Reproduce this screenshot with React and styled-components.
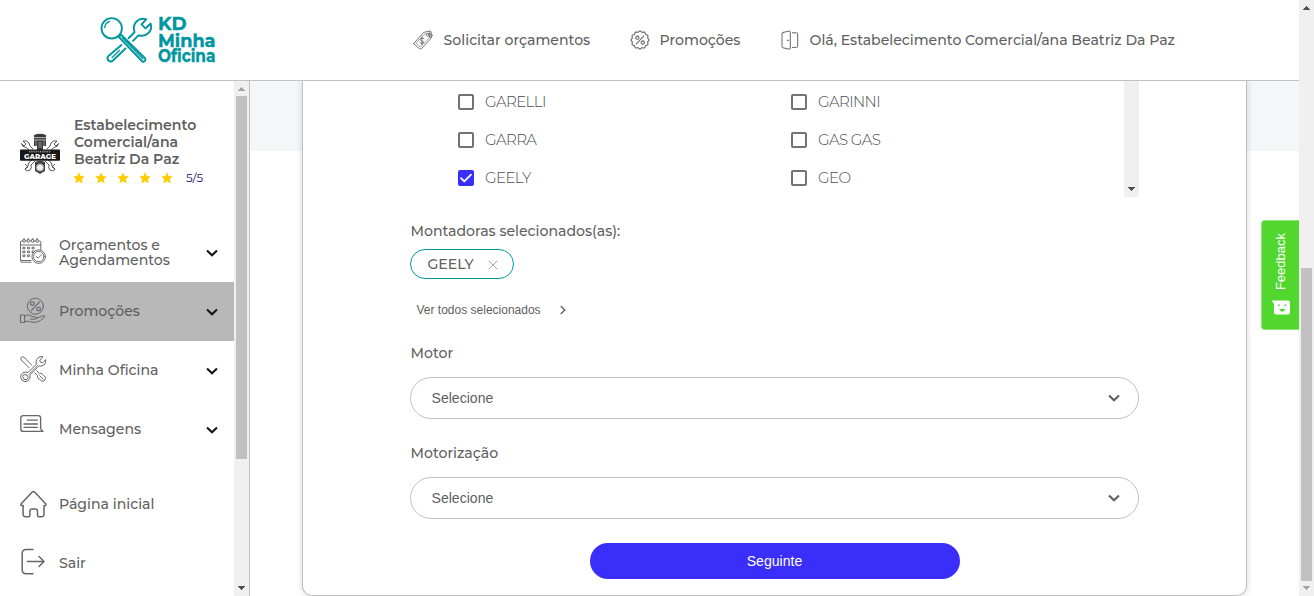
import React from "react";
import styled, { createGlobalStyle } from "styled-components";

const Global = createGlobalStyle`
  *, *::before, *::after { box-sizing: border-box; }
  body { margin: 0; background: #fff; overflow: hidden; }
`;

const brand = `Montserrat, Inter, "Open Sans", sans-serif`;
const arial = `"Liberation Sans", Arial, sans-serif`;

const Page = styled.div`
  display: flex;
  width: 1314px;
  height: 596px;
  overflow: hidden;
  font-family: ${brand};
  color: #5f5f61;
`;
const Main = styled.div`
  flex: 1;
  display: flex;
  flex-direction: column;
  position: relative;
`;
const Header = styled.header`
  height: 81px;
  flex: none;
  display: flex;
  align-items: center;
  border-bottom: 1px solid #c1c1c1;
  padding-left: 99px;
`;
const LogoSvg = styled.svg`
  flex: none;
  overflow: visible;
`;
const Nav = styled.nav`
  display: flex;
  align-items: center;
  margin-left: 195px;
`;
const NavItem = styled.a`
  display: flex;
  align-items: center;
  flex: none;
  width: ${(p) => p.$w}px;
  gap: ${(p) => p.$gap || 9.6}px;
  white-space: nowrap;
`;
const Txt = styled.span`
  font-size: ${(p) => p.$size || 14.08}px;
  font-weight: ${(p) => p.$weight || 500};
  letter-spacing: ${(p) => p.$ls || 0}px;
  line-height: ${(p) => p.$lh || 18}px;
  color: ${(p) => p.$color || "inherit"};
  white-space: nowrap;
`;
const Body = styled.div`
  flex: 1;
  display: flex;
  min-height: 0;
`;
const Sidebar = styled.aside`
  width: 250px;
  display: flex;
  border-right: 1px solid #c1c1c1;
`;
const SideContent = styled.div`
  width: 234px;
  display: flex;
  flex-direction: column;
`;
const Profile = styled.div`
  display: flex;
  height: 142px;
  padding: 36px 0 0 20px;
  gap: 14px;
`;
const Avatar = styled.div`
  padding-top: 16px;
  height: 58px;
`;
const ProfileText = styled.div`
  display: flex;
  flex-direction: column;
`;
const Stars = styled.div`
  display: flex;
  gap: 10px;
  margin-right: 13px;
  svg { display: block; }
`;
const Rating = styled.div`
  display: flex;
  align-items: center;
  height: 19px;
  margin-left: -1px;
`;
const MenuItem = styled.a`
  display: flex;
  align-items: center;
  height: 59px;
  flex: none;
  padding: 0 15px 0 19px;
  gap: 12px;
  background: ${(p) => (p.$active ? "#b8b8b8" : "transparent")};
`;
const MenuIcon = styled.span`
  display: block;
  padding-bottom: ${(p) => p.$lift || 0}px;
  svg { display: block; }
`;
const MenuLabel = styled.div`
  flex: 1;
  display: flex;
  flex-direction: column;
`;
const MenuGap = styled.div`
  height: 15px;
`;
const Track = styled.div`
  width: 15px;
  flex: none;
  display: flex;
  flex-direction: column;
  align-items: center;
  justify-content: space-between;
  background: #f0f0f0;
`;
const Thumb = styled.div`
  width: 11px;
  height: ${(p) => p.$h}px;
  margin-top: ${(p) => p.$top || 0}px;
  margin-bottom: auto;
  background: #c1c1c1;
`;
const ArrowBox = styled.div`
  width: 15px;
  height: 15px;
  flex: none;
  padding: ${(p) => (p.$up ? 6 : 5)}px 4px 0;
  svg { display: block; }
`;
const Content = styled.main`
  flex: 1;
  padding-left: 52px;
  background: linear-gradient(#f4f6f8 70px, #fff 70px);
  overflow: hidden;
`;
const Card = styled.section`
  width: 945px;
  height: 515px;
  border: 1px solid #c1c1c1;
  border-top: none;
  border-radius: 0 0 10px 10px;
  background: #fff;
  box-shadow: 0 0 6px rgba(0, 0, 0, 0.16);
  padding: 0 107px;
  display: flex;
  flex-direction: column;
`;
const BrandList = styled.div`
  height: 116px;
  flex: none;
  display: flex;
`;
const BrandGrid = styled.div`
  flex: 1;
  display: grid;
  grid-template-columns: 333px 333px;
  grid-auto-rows: 38px;
  padding: 2px 0 0 48px;
`;
const Option = styled.label`
  display: flex;
  align-items: center;
  gap: 11px;
`;
const Box = styled.span`
  width: 16px;
  height: 16px;
  border-radius: 2px;
  border: 2px solid ${(p) => (p.$on ? "#3a2efa" : "#737373")};
  background: ${(p) => (p.$on ? "#3a2efa" : "#fff")};
  display: grid;
  place-items: center;
  svg { display: block; overflow: visible; }
`;
const FieldLabel = styled.div`
  height: ${(p) => p.$h}px;
  padding: ${(p) => p.$top}px 0 0 0.5px;
`;
const Chip = styled.div`
  width: 104px;
  height: 30px;
  border: 1px solid #0097a0;
  border-radius: 15px;
  display: flex;
  align-items: center;
  justify-content: space-between;
  padding: 0 15px 0 16.5px;
`;
const SeeAll = styled.a`
  display: flex;
  align-items: center;
  height: 62px;
  padding-left: 6.5px;
  gap: 19.5px;
  font-family: ${arial};
`;
const Select = styled.div`
  height: 42px;
  border: 1px solid #c1c1c1;
  border-radius: 21px;
  display: flex;
  align-items: center;
  justify-content: space-between;
  padding: 0 17px 0 20.5px;
  font-family: ${arial};
`;
const Submit = styled.button`
  width: 370px;
  height: 36px;
  margin: 24px auto 0;
  border: none;
  border-radius: 18px;
  background: #3a2efa;
  color: #fff;
  font: 14.08px ${arial};
`;
const Feedback = styled.button`
  position: absolute;
  right: 0;
  top: 220px;
  width: 38px;
  height: 110px;
  padding: 12px 0 14px 0;
  border: 1px solid #8be67b;
  border-right: none;
  border-radius: 4px 0 0 4px;
  background: #52d72f;
  color: #fff;
  display: flex;
  flex-direction: column;
  align-items: center;
  justify-content: space-between;
`;
const Vertical = styled.span`
  writing-mode: vertical-rl;
  transform: rotate(180deg);
  font: 13px ${arial};
  line-height: 16px;
`;

const Icon = ({ w, h = w, sw = 1, color = "#66666a", children }) => (
  <svg width={w} height={h} viewBox={`0 0 ${w} ${h}`} fill="none" stroke={color}
    strokeWidth={sw} strokeLinecap="round" strokeLinejoin="round">
    {children}
  </svg>
);
const Arrow = ({ up, dark }) => (
  <ArrowBox $up={up}>
    <svg width="7" height="4" shapeRendering="crispEdges">
      <path d={up ? "M0 4L3.5 0L7 4Z" : "M0 0H7L3.5 4Z"} fill={dark ? "#505050" : "#a3a3a3"} />
    </svg>
  </ArrowBox>
);
const Chevron = ({ color = "#161616" }) => (
  <Icon w={14} h={10} sw={2.1} color={color}><path d="M2 2.4L7 7.3L12 2.4" strokeLinecap="butt" strokeLinejoin="miter" /></Icon>
);

const Logo = () => (
  <LogoSvg width="118" height="50" viewBox="99 15 118 50">
    <g fill="none" stroke="#0097a0" strokeWidth="1.9" strokeLinecap="round" strokeLinejoin="round">
      <circle cx="111.7" cy="28.3" r="10.2" />
      <path d="M104.8 27.5Q105.3 23 109.5 21.4" strokeWidth="1.5" />
      <path d="M118.8 36.8L121.4 35L145.3 58.5A2.3 2.3 0 0 1 142.3 61.5L119.4 37.5" />
      <path d="M122.5 37.8L142.8 58.8" strokeWidth="1.4" />
      <path d="M128.5 38.2L134.5 32.3Q132.5 25.5 136.5 21.5Q140.5 17.5 146.3 19.3L141.5 24.3L145.5 28.4L150.6 23.5Q152.5 29 148.5 33Q144.3 37 138.4 35.3L133 40.8" />
      <path d="M121.4 45L108.7 55.7Q106.3 58.2 108.4 60.5Q110.8 62.6 113.2 60.3L125.5 48.5" />
      <path d="M112 57.7L119.6 50.3" strokeWidth="1.2" />
    </g>
    <g fill="#0097a0" fontFamily={brand} fontWeight="700" fontSize="18" stroke="#0097a0" strokeWidth="0.4" strokeLinejoin="round">
      <text x="158" y="30" textLength="28.5" lengthAdjust="spacingAndGlyphs">KD</text>
      <text x="158" y="46.6" textLength="57.5" lengthAdjust="spacingAndGlyphs">Minha</text>
      <text x="158" y="61.8" textLength="57.5" lengthAdjust="spacingAndGlyphs">Oficina</text>
    </g>
  </LogoSvg>
);
const TagIcon = () => (
  <Icon w={22} sw={0.9}>
    <path d="M2 14.2L11.6 3.4L18 2Q19.2 2 19.2 3.4L19.3 9L9.3 19.8Q8.3 20.4 7.3 19.5L2 14.9Q1.6 14.5 2 14.2Z" />
    <path d="M4.3 13.9L12.4 5.2L17.4 4L17.3 8.8L8.6 17.8Z" strokeWidth="0.6" />
    <path d="M11.9 9.4Q9 8.2 8.6 10.3Q8.7 12 10.2 12Q12 12.3 11.3 13.8Q10 15.3 8 13.6M9.9 7.8V15.7" />
    <circle cx="15.6" cy="5.9" r="1.4" strokeWidth="0.7" />
    <path d="M16 5.8Q20.7 4 20.5 6.7Q20 8.5 17.7 7.7M17.8 2.9V8.5" strokeWidth="0.8" />
  </Icon>
);
const badge = Array.from({ length: 72 }, (_, i) => {
  const a = (i / 72) * Math.PI * 2;
  const r = 8.5 + 0.6 * Math.cos(a * 12);
  return `${i ? "L" : "M"}${(10 + r * Math.cos(a)).toFixed(2)} ${(10 + r * Math.sin(a)).toFixed(2)}`;
}).join("") + "Z";
const Percent = ({ x, y, s = 1 }) => (
  <g transform={`translate(${x} ${y}) scale(${s})`}>
    <path d="M3.6 -3.8L-3.6 3.8" /><circle cx="-2.7" cy="-2.3" r="1.6" /><circle cx="2.8" cy="2.5" r="1.6" />
  </g>
);
const BadgeIcon = () => <Icon w={20} sw={1.1}><path d={badge} /><Percent x={10} y={10} /></Icon>;
const DoorIcon = () => (
  <Icon w={20}>
    <path d="M3 2.5L9.3 1Q10.3 1 10.3 2V18.3Q10.2 19.4 9.2 19.2L3 17.8Q2 17.5 2 16.6V3.7Q2 2.8 3 2.5ZM12.4 2.8H16.5Q17.7 2.8 17.7 4V16.2Q17.7 17.4 16.5 17.4H12.4" />
    <circle cx="7.8" cy="10.3" r="0.4" />
  </Icon>
);
const GarageLogo = () => (
  <svg width="40" height="42" viewBox="0 0 40 42">
    <path d="M14 2Q20 -0.5 26 2V13H14ZM17 13H23V18H17Z" fill="#3a3a3a" />
    <path d="M14 4.6H26M14 7H26" stroke="#d5d5d5" strokeWidth="0.8" />
    <path d="M16 13V8M24 13V8M19 9V15M21 9V15" stroke="#aaa" strokeWidth="0.8" />
    <g fill="none" stroke="#444" strokeWidth="0.9">
      <path d="M3 8Q7 7 9 10Q9 13 13 16M3 8L6 11L4 13L1.5 10.5Q2 14 6 14.5L9 17M37 8Q33 7 31 10Q31 13 27 16M37 8L34 11L36 13L38.5 10.5Q38 14 34 14.5L31 17" />
      <path d="M12 27Q8 29 8 33L5 36M5 31L8 34L5 36Q6 39 10 37Q12 35 11 32L15 28M28 27Q32 29 32 33L35 36M35 31L32 34L35 36Q34 39 30 37Q28 35 29 32L25 28" />
    </g>
    <path d="M15 29L18 28H22L25 29V38L20 41L15 38Z" fill="#444" />
    <circle cx="20" cy="34.5" r="3.6" fill="#eee" stroke="#999" />
    <rect y="16.5" width="40" height="11.3" rx="1" fill="#171717" />
    <path d="M9 18.6H31" stroke="#8a8a8a" strokeWidth="1.6" strokeDasharray="1.4 0.8" />
    <text x="4" y="26" fontSize="7.4" fontWeight="800" fill="#fff" fontFamily={brand} textLength="32" lengthAdjust="spacingAndGlyphs">GARAGE</text>
  </svg>
);
const Star = () => (
  <svg width="12" height="12" viewBox="0 0 12 12"><path d="M6 0.2L7.7 4.1L11.8 4.5L8.7 7.3L9.7 11.6L6 9.3L2.3 11.6L3.3 7.3L0.2 4.5L4.3 4.1Z" fill="#fc0" /></svg>
);
const CalendarIcon = () => (
  <Icon w={28} sw={0.95}>
    <path d="M12 24.2H3Q1.5 24.2 1.5 22.5V4Q1.5 3 3 3H20.5Q21.8 3 21.8 4V12M1.5 7H21.8M1.5 22Q2 22.5 3 22.5H12" />
    {[5, 9.2, 13.6, 18].map((x) => <rect key={x} x={x - 1} y="1" width="2.1" height="3.4" rx="1" fill="#fff" />)}
    {[10, 13.8, 17.6].map((y) => [5, 9.6, 14.2].filter((x) => y < 17 || x < 12).map((x) => <rect key={x + "-" + y} x={x - 0.8} y={y - 0.7} width="1.8" height="1.5" />))}
    <circle cx="19.7" cy="18.6" r="6.8" fill="#fff" /><circle cx="19.7" cy="18.6" r="5.2" />
    <path d="M17 18.3L19.1 20.2L22.6 16.7" />
  </Icon>
);
const HandIcon = () => (
  <Icon w={28}>
    <circle cx="16.4" cy="9.2" r="8" /><Percent x={16.4} y={9.2} s={1.15} />
    <path d="M1.8 18H5.6V25.4H1.8ZM5.6 19Q9 16.5 12 19Q13.2 20 17 20Q18.3 20.4 17.5 21.8Q16.5 22.5 11.5 22.1M17.8 21.2L24.3 18.7Q26.8 18.5 25.5 20.2Q21 24.5 17.5 25.2Q14 25.7 10.5 24.6Q8 23.8 5.6 24.8" />
  </Icon>
);
const ToolsIcon = () => (
  <Icon w={28}>
    <path d="M10.2 12.8L4.7 7.4L3.4 6.6L1.6 3.3L3.2 1.5L6.5 3.3L7.4 4.7L12.8 10.2M15.8 17.8L18.7 20.7Q18 22 19 23L22.6 26Q24.3 26.5 25.8 25Q27.2 23.5 26 21.8L23 18.7Q21.7 17.8 20.6 18.7L17.8 15.8M20.7 20.8L24.2 24.2" />
    <path d="M17.2 8.9Q16.4 4 20 2.2Q22 1 24 1.9L20.8 5L21.4 7.2L23.5 7.8L26.7 4.6Q27.2 8 25 10Q22.5 11.8 19.6 11.1L11 19.7Q12 23.8 8.8 26Q5.7 27.5 3 25.2Q0.6 22.5 2.2 19.5Q4.5 16.2 8.7 17.4Z" />
    <path d="M10 19.1L19.2 9.8" strokeWidth="0.7" /><path d="M5 19.7L8 19.9L9.3 22.2L7.8 24.5L5 24.3L3.8 22Z" />
  </Icon>
);
const MessageIcon = () => (
  <Icon w={28} h={20} sw={1.35}>
    <path d="M23.9 17.4H4.4Q1.8 17.4 1.8 14.9V4Q1.8 1.6 4.4 1.6H19.2Q21.6 1.6 21.6 4V14.1Q21.6 15.6 23.9 17.4ZM8.2 6.1H18.4M5 10H18.4M5 13.3H18.4" />
  </Icon>
);
const HomeIcon = () => (
  <Icon w={28} sw={1.5}>
    <path d="M3.8 15.5H2.3Q1.5 14.5 2.2 13.8L13.2 2.1Q14.4 1 15.6 2.1L26.6 13.8Q27.3 14.7 26.5 15.5L25 15.7V24.9Q24.8 26.7 23 26.7H19.5Q18.5 26.5 18.5 25.5V21.2Q18.4 19.1 16.5 19.1H12.9Q11 19.1 10.9 21.2V25.5Q10.8 26.7 9.8 26.7H6.3Q4.3 26.7 4.1 24.9V15.5Z" />
  </Icon>
);
const ExitIcon = () => (
  <Icon w={28} sw={1.5}><path d="M14 1.5H7.3Q3.2 1.5 3.2 5.5V21.8Q3.2 25.8 7.3 25.8H14M8.5 13.5H25M20 8.5L25 13.5L20 18.5" /></Icon>
);
const Smiley = () => (
  <svg width="20" height="15" viewBox="0 0 20 15">
    <path d="M0.5 0.5H17Q19 0.5 19 2.5V12.5Q19 14.5 17 14.5H5Q3 14.5 3 12.5V4Z" fill="#fff" />
    <path d="M7 5.3H8.6M13.5 5.3H15.1" stroke="#52d72f" strokeWidth="1.6" />
    <path d="M8.2 9H14.2Q13.5 11.7 11.2 11.7Q9 11.7 8.2 9Z" fill="#52d72f" />
  </svg>
);

const brands = [
  { name: "GARELLI" }, { name: "GARINNI" },
  { name: "GARRA" }, { name: "GAS GAS" },
  { name: "GEELY", on: true }, { name: "GEO" },
];
const menu = [
  { icon: CalendarIcon, lines: ["Orçamentos e", "Agendamentos"], lift: 2 },
  { icon: HandIcon, lines: ["Promoções"], active: true, lift: 1 },
  { icon: ToolsIcon, lines: ["Minha Oficina"], lift: 3 },
  { icon: MessageIcon, lines: ["Mensagens"], lift: 11 },
];

export default function App() {
  return (
    <Page>
      <Global />
      <Main>
        <Header>
          <Logo />
          <Nav>
            <NavItem $w={218}><TagIcon /><Txt>Solicitar orçamentos</Txt></NavItem>
            <NavItem $w={150}><BadgeIcon /><Txt>Promoções</Txt></NavItem>
            <NavItem $w={400}><DoorIcon /><Txt>Olá, Estabelecimento Comercial/ana Beatriz Da Paz</Txt></NavItem>
          </Nav>
        </Header>
        <Body>
          <Sidebar>
            <SideContent>
              <Profile>
                <Avatar><GarageLogo /></Avatar>
                <ProfileText>
                  <Txt $weight={600} $lh={17}>Estabelecimento</Txt>
                  <Txt $weight={600} $lh={17}>Comercial/ana</Txt>
                  <Txt $weight={600} $lh={17}>Beatriz Da Paz</Txt>
                  <Rating>
                    <Stars><Star /><Star /><Star /><Star /><Star /></Stars>
                    <Txt $size={11.7} $weight={400} $lh={16} $color="#14006e">5/5</Txt>
                  </Rating>
                </ProfileText>
              </Profile>
              {menu.map(({ icon: I, lines, active, lift }) => (
                <MenuItem key={lines[0]} $active={active}>
                  <MenuIcon $lift={lift}><I /></MenuIcon>
                  <MenuLabel>
                    {lines.map((t) => <Txt key={t} $lh={15}>{t}</Txt>)}
                  </MenuLabel>
                  <Chevron />
                </MenuItem>
              ))}
              <MenuGap />
              <MenuItem><HomeIcon /><Txt>Página inicial</Txt></MenuItem>
              <MenuItem><MenuIcon $lift={2}><ExitIcon /></MenuIcon><Txt>Sair</Txt></MenuItem>
            </SideContent>
            <Track><Arrow up /><Thumb $h={363} /><Arrow dark /></Track>
          </Sidebar>
          <Content>
            <Card>
              <BrandList>
                <BrandGrid>
                  {brands.map(({ name, on }) => (
                    <Option key={name}>
                      <Box $on={on}>
                        {on && <Icon w={12} sw={1.8} color="#fff"><path d="M1 6.2L4.3 9.4L11 2.6" /></Icon>}
                      </Box>
                      <Txt $size={15} $ls={-0.6} $weight={300} $color="#4c4c50">{name}</Txt>
                    </Option>
                  ))}
                </BrandGrid>
                <Track><span /><Arrow dark /></Track>
              </BrandList>
              <FieldLabel $h={52} $top={24}><Txt>Montadoras selecionados(as):</Txt></FieldLabel>
              <Chip>
                <Txt>GEELY</Txt>
                <Icon w={10} sw={0.8} color="#8a8a8a"><path d="M1 2L9 10M9 2L1 10" /></Icon>
              </Chip>
              <SeeAll>
                <Txt $size={12} $weight={400}>Ver todos selecionados</Txt>
                <Icon w={6} h={10} sw={1.6}><path d="M1.2 1.5L4.8 5L1.2 8.5" /></Icon>
              </SeeAll>
              <FieldLabel $h={36} $top={2}><Txt>Motor</Txt></FieldLabel>
              <Select><Txt $weight={400}>Selecione</Txt><Chevron color="#5f5f61" /></Select>
              <FieldLabel $h={58} $top={24}><Txt>Motorização</Txt></FieldLabel>
              <Select><Txt $weight={400}>Selecione</Txt><Chevron color="#5f5f61" /></Select>
              <Submit>Seguinte</Submit>
            </Card>
          </Content>
        </Body>
        <Feedback><Vertical>Feedback</Vertical><Smiley /></Feedback>
      </Main>
      <Track><Arrow up dark /><Thumb $top={253} $h={313} /><Arrow /></Track>
    </Page>
  );
}
